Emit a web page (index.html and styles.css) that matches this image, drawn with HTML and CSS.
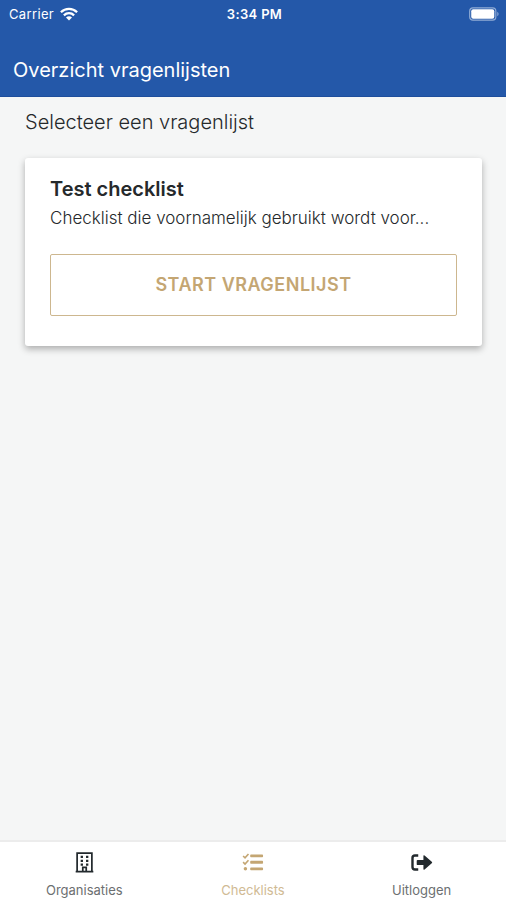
FILE: index.html
```html
<!DOCTYPE html>
<html lang="nl">
<head>
<meta charset="utf-8">
<title>Overzicht vragenlijsten</title>
<link rel="stylesheet" href="styles.css">
</head>
<body>
<header class="header">
  <div class="status">
    <div class="carrier"><span>Carrier</span>
      <svg class="wifi" viewBox="0 0 18 14"><g fill="none" stroke="#fff" stroke-width="2.3"><path d="M.9 5.2C5.5.7 12.5.7 17.1 5.2"/><path d="M3.9 8.3c2.9-2.8 7.3-2.8 10.2 0"/></g><path fill="#fff" d="M6 10.5c1.7-1.6 4.3-1.6 6 0l-3 3z"/></svg>
    </div>
    <span class="time">3:34 PM</span>
    <svg class="battery" viewBox="0 0 32 14"><rect x=".7" y=".7" width="27" height="12.6" rx="3.4" fill="none" stroke="#91acd5" stroke-width="1.2"/><rect x="2.3" y="2.2" width="23.8" height="9.6" rx="2" fill="#fff"/><path d="M29 4.7c2.2.8 2.2 3.8 0 4.6z" fill="#7799cd"/></svg>
  </div>
  <h1 class="title">Overzicht vragenlijsten</h1>
</header>
<main class="main">
  <p class="intro">Selecteer een vragenlijst</p>
  <section class="card">
    <h2 class="card-title">Test checklist</h2>
    <p class="card-text">Checklist die voornamelijk gebruikt wordt voor...</p>
    <button class="start">START VRAGENLIJST</button>
  </section>
</main>
<nav class="tabs">
  <a class="tab">
    <svg class="icon" viewBox="0 0 24 24"><path d="M4.3 21V2.2h15.4V21M2.8 21.5h18.4M10.2 21v-3.8h3.6V21" fill="none" stroke="currentColor" stroke-width="1.8"/><path fill="currentColor" d="M8 5h2.4v2.4H8zM13.6 5H16v2.4h-2.4zM8 9h2.4v2.4H8zM13.6 9H16v2.4h-2.4zM8 13h2.4v2.4H8zM13.6 13H16v2.4h-2.4z"/></svg>
    <span class="label">Organisaties</span>
  </a>
  <a class="tab active">
    <svg class="icon" viewBox="0 0 24 24"><path d="M2.2 5.2l2 1.9 3.6-4M2.2 11.7l2 1.9 3.6-4" fill="none" stroke="currentColor" stroke-width="1.7"/><circle cx="4.6" cy="18.6" r="1.8" fill="currentColor"/><path fill="currentColor" d="M10.4 3.7h11.8q.8 0 .8.8v1.3q0 .8-.8.8H10.4q-.8 0-.8-.8V4.5q0-.8.8-.8zM10.4 10.3h11.8q.8 0 .8.8v1.3q0 .8-.8.8H10.4q-.8 0-.8-.8v-1.3q0-.8.8-.8zM10.4 17.1h11.8q.8 0 .8.8v1.3q0 .8-.8.8H10.4q-.8 0-.8-.8v-1.3q0-.8.8-.8z"/></svg>
    <span class="label">Checklists</span>
  </a>
  <a class="tab">
    <svg class="icon" viewBox="0 0 24 24"><path d="M8.6 4.7H5.2Q2.6 4.7 2.6 7.3v9.4q0 2.6 2.6 2.6h3.4" fill="none" stroke="currentColor" stroke-width="2.5"/><path fill="currentColor" d="M8 9.3h6V5.2q0-1.4 1.2-.5l7.5 6.4q1 .9 0 1.8l-7.5 6.4q-1.2.9-1.2-.5v-4.1H8q-1 0-1-1v-3.4q0-1 1-1z"/></svg>
    <span class="label">Uitloggen</span>
  </a>
</nav>
</body>
</html>
```
FILE: styles.css
```css
* { box-sizing: border-box; }
body {
  margin: 0;
  height: 900px;
  display: flex;
  flex-direction: column;
  overflow: hidden;
  background: #f5f6f6;
  color: #25292b;
  font-family: Inter, "Liberation Sans", sans-serif;
}
h1, h2, p { margin: 0; font-weight: 400; white-space: nowrap; }
.header { height: 97px; background: #2458a9; color: #fff; border-bottom: 1px solid #1e4e9c; }
.status {
  height: 27px;
  padding: 0 6px 0 9px;
  display: grid;
  grid-template-columns: 1fr auto 1fr;
  align-items: center;
  font-size: 13px;
  line-height: 26px;
}
.carrier { display: flex; align-items: center; gap: 6px; letter-spacing: .35px; }
.wifi { width: 18px; height: 14px; }
.time { font-weight: 600; letter-spacing: .35px; }
.battery { width: 31px; height: 14px; justify-self: end; }
.title { padding: 27px 13px 0; font-size: 20px; line-height: 32px; }
.main { flex: 1; padding: 10px 24px 0 25px; }
.intro { font-size: 20px; line-height: 30px; font-weight: 300; }
.card {
  height: 188px;
  margin-top: 21px;
  padding: 17px 25px 0;
  background: #fff;
  border-radius: 3px;
  box-shadow: 0 3px 7px rgba(0, 0, 0, .3);
}
.card-title { font-size: 20px; line-height: 28px; font-weight: 600; }
.card-text { font-size: 17px; line-height: 30px; font-weight: 300; }
.start {
  display: block;
  width: 100%;
  height: 62px;
  margin-top: 21px;
  padding: 0;
  border: 1px solid #cdb78f;
  border-radius: 2px;
  background: #fff;
  color: #c4a673;
  font: 600 18px/58px Inter, "Liberation Sans", sans-serif;
  letter-spacing: .5px;
}
.tabs {
  height: 60px;
  display: grid;
  grid-template-columns: repeat(3, 1fr);
  background: #fff;
  border-top: 2px solid #ececec;
}
.tab { display: flex; flex-direction: column; align-items: center; padding-top: 9px; color: #22292d; }
.icon { width: 23px; height: 23px; }
.label { margin-top: 7px; font-size: 13px; line-height: 18px; color: #6c6f71; font-weight: 400; }
.active, .active .label { color: #c4a673; }
.active .label { color: #d0ba94; }
```
